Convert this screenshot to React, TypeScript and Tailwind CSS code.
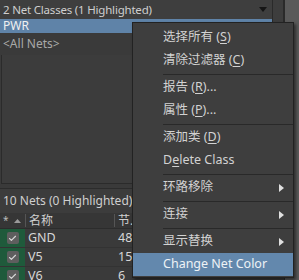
import { Check } from "lucide-react";

const font = { fontFamily: '"Noto Sans", "Noto Sans CJK SC", sans-serif' };

const nets = [
  { name: "GND", nodes: "48" },
  { name: "V5", nodes: "15" },
  { name: "V6", nodes: "6" },
];

type Item = { label: React.ReactNode; sub?: boolean; sepAfter?: boolean; active?: boolean };

const items: Item[] = [
  { label: <>选择所有 (<u>S</u>)</> },
  { label: <>清除过滤器 (<u>C</u>)</>, sepAfter: true },
  { label: <>报告 (<u>R</u>)...</> },
  { label: <>属性 (<u>P</u>)...</>, sepAfter: true },
  { label: <>添加类 (<u>D</u>)</> },
  { label: <>D<u>e</u>lete Class</>, sepAfter: true },
  { label: "环路移除", sub: true, sepAfter: true },
  { label: "连接", sub: true, sepAfter: true },
  { label: "显示替换", sub: true },
  { label: "Change Net Color", active: true },
];

function ContextMenu() {
  return (
    <div className="absolute left-[132px] top-[22px] w-[162px] bg-[#3e3e3e] border border-[#222] shadow-[2px_2px_3px_rgba(0,0,0,0.5)] pt-[3px] pb-[1px] text-[12.5px] text-[#d2d2d2]">
      {items.map((it, i) => (
        <div key={i}>
          <div
            className={`flex items-center h-[23px] pl-[30px] pr-[8px] ${it.active ? "bg-[#6388ad] text-[#eef2f6]" : ""}`}
          >
            <span className="flex-1 whitespace-nowrap [&_u]:underline-offset-2">{it.label}</span>
            {it.sub && (
              <svg width="5" height="8" viewBox="0 0 5 8" className="mr-[1px]">
                <path d="M0 0 L5 4 L0 8 Z" fill="#e0e0e0" />
              </svg>
            )}
          </div>
          {it.sepAfter && (
            <div className="h-[4px] flex items-center pl-[30px]">
              <div className="flex-1 h-[1px] bg-[#292929]" />
            </div>
          )}
        </div>
      ))}
    </div>
  );
}

export default function App() {
  return (
    <div style={font} className="relative w-[299px] h-[280px] overflow-hidden bg-[#3a3a3a] flex text-[12px]">
      <div className="w-[284px] flex flex-col">
        {/* net classes panel */}
        <div className="flex h-[184px] shrink-0">
          <div className="w-[273px] flex flex-col border-r border-[#2a2a2a]">
            <div className="h-[19px] shrink-0 flex items-center justify-between pl-[3px] pr-[5px] bg-[#3e3e3e] text-[#cfcfcf]">
              <span className="whitespace-nowrap text-[11.5px] tracking-[-0.2px]">2 Net Classes (1 Highlighted)</span>
              <svg width="8" height="5" viewBox="0 0 8 5"><path d="M0 0 H8 L4 5 Z" fill="#151515" /></svg>
            </div>
            <div className="h-[14px] shrink-0 flex items-center pl-[3px] bg-[#5f83a8] text-[#f0f0f0]">PWR</div>
            <div className="h-[22px] shrink-0 flex items-center pl-[3px] text-[#a9a9a9]">&lt;All Nets&gt;</div>
            <div className="flex-1 mx-[1px] border-l border-b border-[#2b2b2b] bg-[#3c3c3c]" />
          </div>
          <div className="w-[11px] bg-[#3d3d3d] border-r border-[#2a2a2a]" />
        </div>
        {/* nets panel */}
        <div className="mt-[4px] shrink-0 flex flex-col border-t border-[#2c2c2c]">
          <div className="h-[24px] shrink-0 flex items-center pl-[3px] text-[#cfcfcf] bg-[#3c3c3c]">10 Nets (0 Highlighted)</div>
          <div className="h-[16px] shrink-0 flex items-center bg-[#363636] text-[#cfcfcf] border-b border-[#2c2c2c]">
            <span className="w-[11px] pl-[3px] text-[10px] text-[#bbb]">*</span>
            <svg width="7" height="4" viewBox="0 0 7 4" className="ml-[3px]"><path d="M0 4 L3.5 0 L7 4 Z" fill="#9a9a9a" /></svg>
            <span className="w-[1px] h-[13px] bg-[#555] ml-[4px]" />
            <span className="w-[88px] pl-[3px]">名称</span>
            <span className="w-[1px] h-[13px] bg-[#555]" />
            <span className="pl-[3px]">节.</span>
          </div>
          {nets.map((n) => (
            <div key={n.name} className="h-[19px] shrink-0 flex items-center border-b border-[#333] text-[#d6d6d6] text-[12.5px]">
              <div className="w-[25px] h-full bg-[#1f5a3b] flex items-center justify-center">
                <div className="w-[12px] h-[12px] rounded-[2px] bg-[#5e5e5e] flex items-center justify-center">
                  <Check size={9} strokeWidth={3} color="#d8d8d8" />
                </div>
              </div>
              <span className="w-[91px] pl-[3px]">{n.name}</span>
              <span className="pl-[2px]">{n.nodes}</span>
            </div>
          ))}
        </div>
      </div>
      <div className="flex-1 bg-[#5a5a5a] border-l border-[#2a2a2a]" />
      <ContextMenu />
    </div>
  );
}
